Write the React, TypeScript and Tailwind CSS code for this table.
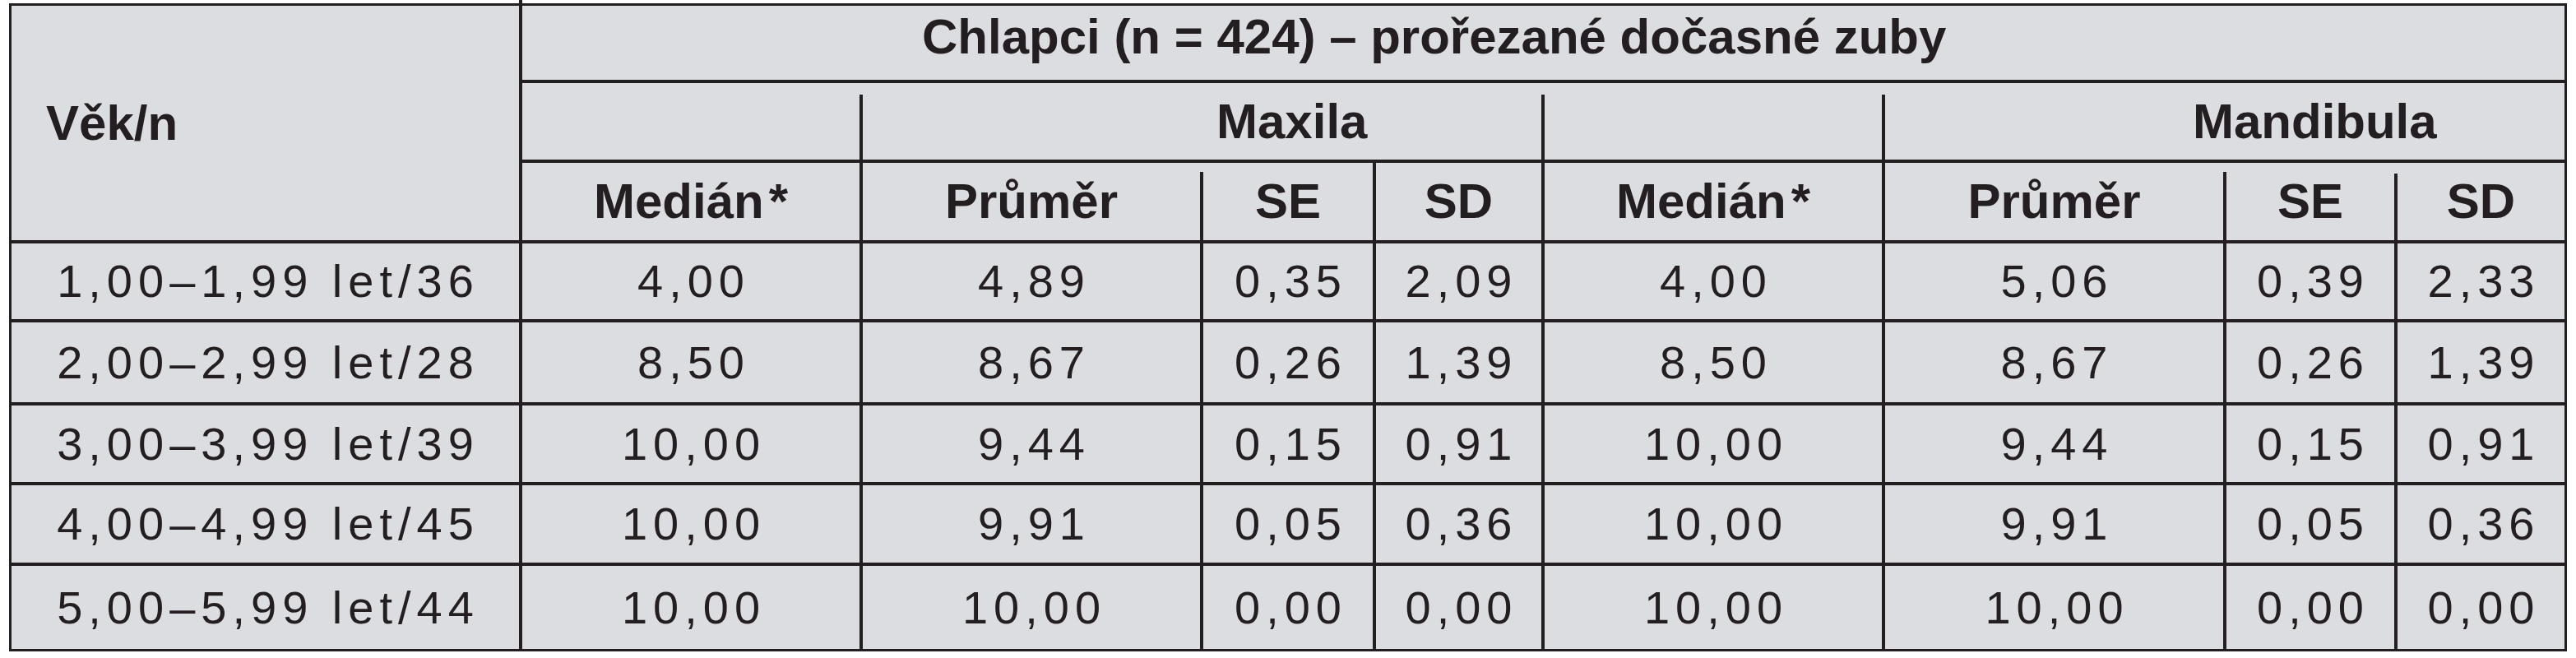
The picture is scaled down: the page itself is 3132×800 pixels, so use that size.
const rows = [
  ['1,00–1,99 let/36', '4,00', '4,89', '0,35', '2,09', '4,00', '5,06', '0,39', '2,33'],
  ['2,00–2,99 let/28', '8,50', '8,67', '0,26', '1,39', '8,50', '8,67', '0,26', '1,39'],
  ['3,00–3,99 let/39', '10,00', '9,44', '0,15', '0,91', '10,00', '9,44', '0,15', '0,91'],
  ['4,00–4,99 let/45', '10,00', '9,91', '0,05', '0,36', '10,00', '9,91', '0,05', '0,36'],
  ['5,00–5,99 let/44', '10,00', '10,00', '0,00', '0,00', '10,00', '10,00', '0,00', '0,00'],
];

const head = 'text-[60px] font-bold leading-none';
const num = 'text-[56px] leading-none tracking-[7px] pl-[7px]';

// cell whose left rule stops short of the line above it
function GapCell({ gap, className, children }: { gap: string; className: string; children?: React.ReactNode }) {
  return (
    <div className={`flex border-t-4 border-[#231f20] ${className}`}>
      <div className={`w-[4px] shrink-0 bg-[#231f20] ${gap}`} />
      <div className="flex flex-1 items-center justify-center">{children}</div>
    </div>
  );
}

export default function App() {
  return (
    <div className="bg-white font-['Liberation_Sans',Arial,sans-serif] text-[#231f20]">
      <div className="ml-[631px] h-[4px] w-[4px] bg-[#231f20]" />
      <div className="ml-[11px] grid w-[3110px] grid-cols-[620px_414px_414px_210px_205px_414px_415px_208px_207px] grid-rows-[93px_97px_98px_96px_101px_97px_98px_105px] border-r-[3px] border-b-[3px] border-[#231f20] bg-[#dcdde0]">
        {/* header */}
        <div className={`row-span-3 flex items-center border-t-[3px] border-l-[3px] border-[#231f20] pl-[42px] ${head}`}>
          Věk/n
        </div>
        <div className={`col-span-8 flex items-center border-t-[3px] border-l-4 border-[#231f20] pb-[14px] pl-[486px] ${head}`}>
          Chlapci (n = 424) – prořezané dočasné zuby
        </div>

        <div className="border-t-4 border-l-4 border-[#231f20]" />
        <div className="col-span-3 flex border-t-4 border-[#231f20]">
          <div className="mt-[14px] w-[4px] shrink-0 bg-[#231f20]" />
          <div className={`flex flex-1 items-center pl-[430px] ${head}`}>Maxila</div>
        </div>
        <GapCell gap="mt-[14px]" className="" />
        <div className="col-span-3 flex border-t-4 border-[#231f20]">
          <div className="mt-[14px] w-[4px] shrink-0 bg-[#231f20]" />
          <div className={`flex flex-1 items-center pl-[374px] ${head}`}>Mandibula</div>
        </div>

        <div className={`flex items-center justify-center border-t-4 border-l-4 border-[#231f20] ${head}`}>
          Medián<span className="pl-[6px]">*</span>
        </div>
        <div className={`flex items-center justify-center border-t-4 border-l-4 border-[#231f20] ${head}`}>Průměr</div>
        <GapCell gap="mt-[11px]" className={head}>SE</GapCell>
        <div className={`flex items-center justify-center border-t-4 border-l-4 border-[#231f20] ${head}`}>SD</div>
        <div className={`flex items-center justify-center border-t-4 border-l-4 border-[#231f20] ${head}`}>
          Medián<span className="pl-[6px]">*</span>
        </div>
        <div className={`flex items-center justify-center border-t-4 border-l-4 border-[#231f20] ${head}`}>Průměr</div>
        <GapCell gap="mt-[11px]" className={head}>SE</GapCell>
        <GapCell gap="mt-[13px]" className={head}>SD</GapCell>

        {/* body */}
        {rows.map((r, i) =>
          r.map((v, j) => (
            <div
              key={`${i}-${j}`}
              className={`flex items-center justify-center border-t-4 border-[#231f20] ${j === 0 ? 'border-l-[3px]' : 'border-l-4'} ${num}`}
            >
              {v}
            </div>
          ))
        )}
      </div>
    </div>
  );
}
